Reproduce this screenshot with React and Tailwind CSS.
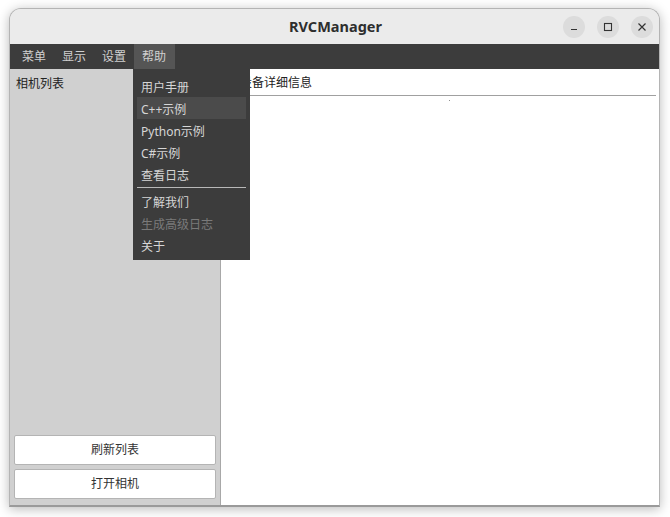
import React from "react";

const FONT = { fontFamily: '"Noto Sans", "Noto Sans CJK SC", sans-serif' };

function WinBtn({ children }) {
  return (
    <div className="w-[22px] h-[22px] rounded-full bg-[#dcdcdc] flex items-center justify-center text-[#3a3a3a]">
      {children}
    </div>
  );
}

function MenuItem({ label, active, disabled }) {
  return (
    <div
      className={`h-[22px] px-[4px] pt-[3px] flex items-center text-[12px] leading-none ${
        active ? "bg-[#4b4b4b]" : ""
      } ${disabled ? "text-[#7a7a7a]" : "text-[#d6d6d6]"}`}
    >
      {label}
    </div>
  );
}

export default function App() {
  return (
    <div className="w-[670px] h-[517px] bg-white pl-[9px] pt-[8px] overflow-hidden" style={FONT}>
      <div className="relative w-[651px] h-[499px] rounded-t-[12px] border border-[#b4b4b4] border-b-2 border-b-[#9a9a9a] bg-[#ebebeb] shadow-[0_2px_12px_rgba(0,0,0,0.28)] flex flex-col overflow-hidden">
        {/* title bar */}
        <div className="h-[35px] shrink-0 bg-[#ebebeb] flex items-center relative">
          <div className="flex-1 text-center text-[14.5px] font-bold text-[#2e2e2e] pl-[2px]">RVCManager</div>
          <div className="absolute right-[6px] top-[7px] flex gap-[12px]">
            <WinBtn>
              <svg width="10" height="10" viewBox="0 0 10 10"><path d="M2 7.5h6" stroke="#333" strokeWidth="1.2" /></svg>
            </WinBtn>
            <WinBtn>
              <svg width="10" height="10" viewBox="0 0 10 10"><rect x="1.5" y="1.5" width="7" height="7" fill="none" stroke="#333" strokeWidth="1.1" /></svg>
            </WinBtn>
            <WinBtn>
              <svg width="10" height="10" viewBox="0 0 10 10"><path d="M1.5 1.5l7 7M8.5 1.5l-7 7" stroke="#333" strokeWidth="1.2" /></svg>
            </WinBtn>
          </div>
        </div>
        {/* menu bar */}
        <div className="h-[25px] shrink-0 bg-[#3c3c3c] flex pl-[4px] text-[12px] text-[#d0d0d0]">
          <div className="w-[40px] px-[8px] flex items-center">菜单</div>
          <div className="w-[40px] px-[8px] flex items-center">显示</div>
          <div className="w-[40px] px-[8px] flex items-center">设置</div>
          <div className="w-[41px] px-[8px] flex items-center bg-[#555555]">帮助</div>
        </div>
        {/* content */}
        <div className="flex-1 flex min-h-0">
          <div className="w-[211px] bg-[#d0d0d0] border-r border-[#a8a8a8] flex flex-col pl-[4px] pr-[4px] pb-[6px]">
            <div className="text-[12px] text-[#222] pl-[2px] pt-[6px]">相机列表</div>
            <div className="flex-1" />
            <div className="flex flex-col gap-[4px]">
              <button className="h-[30px] bg-white border border-[#b4b4b4] rounded-[2px] text-[12px] text-[#333]">刷新列表</button>
              <button className="h-[30px] bg-white border border-[#b4b4b4] rounded-[2px] text-[12px] text-[#333]">打开相机</button>
            </div>
          </div>
          <div className="flex-1 bg-white flex flex-col pr-[3px]">
            <div className="h-[27px] border-b border-[#a0a0a0] flex items-center pl-[19px] pt-[2px] text-[12px] text-[#222]">设备详细信息</div>
            <div className="pl-[228px] pt-[4px]">
              <div className="w-[1px] h-[1px] bg-[#909090]" />
            </div>
          </div>
        </div>

        {/* dropdown */}
        <div className="absolute left-[123px] top-[60px] w-[117px] bg-[#3c3c3c] pt-[6px] pb-[4px] px-[4px] flex flex-col" style={FONT}>
          <MenuItem label="用户手册" />
          <MenuItem label="C++示例" active />
          <MenuItem label="Python示例" />
          <MenuItem label="C#示例" />
          <MenuItem label="查看日志" />
          <div className="h-[5px] flex items-center">
            <div className="w-full h-[1px] bg-[#b8b8b8]" />
          </div>
          <MenuItem label="了解我们" />
          <MenuItem label="生成高级日志" disabled />
          <MenuItem label="关于" />
        </div>
      </div>
    </div>
  );
}
